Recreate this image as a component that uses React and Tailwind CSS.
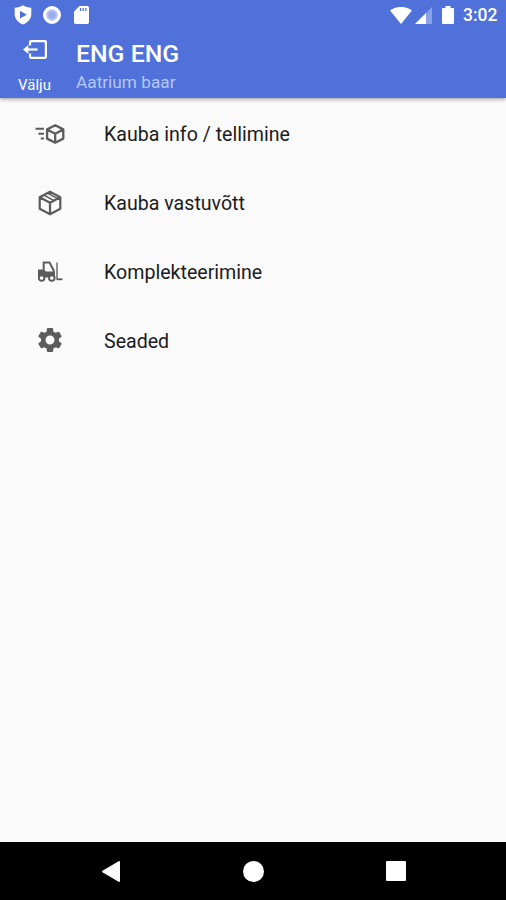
const ShieldIcon = () => (
    <svg className="w-[18px] h-5" viewBox="0 0 18 20" aria-hidden="true">
        <path fill="currentColor" fillRule="evenodd" d="M9 0.3c2.3 1.6 5 2.3 8.300 2.4v6.6c0 4.6-3.300 8.2-8.300 10.3-5-2.1-8.300-5.700-8.300-10.300V2.700c3.300-.1 6-.8 8.300-2.400zM6 5.800v7.800l6.800-3.900z" />
    </svg>
);

const RecordIcon = () => (
    <svg className="w-[18px] h-[18px]" viewBox="0 0 18 18" aria-hidden="true">
        <circle cx="9" cy="9" r="7.400" fill="#b4c3f2" stroke="currentColor" strokeWidth="3.200" />
        <circle cx="9" cy="9" r="3.600" fill="#9aaeeb" />
    </svg>
);

const SdCardIcon = () => (
    <svg className="w-[15px] h-[18px]" viewBox="0 0 15 18" aria-hidden="true">
        <path fill="currentColor" d="M5.500 0H13.300Q15 0 15 1.700V16.300Q15 18 13.300 18H1.700Q0 18 0 16.300V5.500z" />
        <path stroke="#4f71d9" strokeWidth="1.300" d="M6.500 2v3M9.200 2v3M11.900 2v3" />
    </svg>
);

const WifiIcon = () => (
    <svg className="w-[22px] h-[17px]" viewBox="0 0 22 17" aria-hidden="true">
        <path fill="currentColor" d="M0 3.500C6.500-1.200 15.500-1.200 22 3.500L11 17z" />
    </svg>
);

const SignalIcon = () => (
    <svg className="w-[17px] h-[17px]" viewBox="0 0 17 17" aria-hidden="true">
        <path fill="currentColor" opacity=".35" d="M17 0v17H0z" />
        <path fill="currentColor" d="M11 6v11H0z" />
    </svg>
);

const BatteryIcon = () => (
    <svg className="w-3 h-[18px]" viewBox="0 0 12 18" aria-hidden="true">
        <path fill="currentColor" d="M3.500 0h5v2H11Q12 2 12 3V17Q12 18 11 18H1Q0 18 0 17V3Q0 2 1 2H3.500z" />
    </svg>
);

const ExitIcon = () => (
    <svg className="w-6 h-[19px]" viewBox="0 0 24 19" fill="none" stroke="currentColor" strokeWidth="2.200" aria-hidden="true">
        <path d="M7 5.500V2.200Q7 1.200 8 1.200H22Q22.900 1.200 22.900 2.200V16.800Q22.900 17.800 22 17.800H8Q7 17.800 7 16.800V13.500" />
        <path d="M14.500 9.500H3" />
        <path fill="currentColor" stroke="none" d="M0 9.500L5.400 5V14z" />
    </svg>
);

const BoxFastIcon = () => (
    <svg className="w-[30px] h-5" viewBox="0 0 30 20" fill="none" stroke="currentColor" strokeWidth="2.300" aria-hidden="true">
        <path d="M.5 4.800H9M3.400 9.700H9M5.800 14.600H9" strokeWidth="2" />
        <path strokeLinejoin="round" d="M20.200 1.300L28.300 5.400V14.600L20.200 18.700L12.100 14.600V5.400zM12.100 5.400L20.200 9.700L28.300 5.400M20.200 9.700V18.700" />
    </svg>
);

const BoxIcon = () => (
    <svg className="w-6 h-[26px]" viewBox="0 0 24 26" fill="none" stroke="currentColor" strokeWidth="2.200" strokeLinejoin="round" aria-hidden="true">
        <path d="M12 1.700L22.300 7.200V18.800L12 24.300L1.700 18.800V7.200zM1.700 7.200L12 12.800L22.300 7.200M12 12.800V24.300" />
        <path d="M5.700 5L16.100 10.700M9.400 3.200L19.700 8.700" strokeWidth="1.500" />
    </svg>
);

const ForkliftIcon = () => (
    <svg className="w-[26px] h-[21px]" viewBox="0 0 26 21" fill="none" stroke="currentColor" aria-hidden="true">
        <path d="M6.700 10V1.500H12.500L16.700 9.500V14" strokeWidth="2" />
        <path fill="currentColor" stroke="none" d="M1 8.500H5.500L9.300 10.500H17.800V16.500H1z" />
        <circle cx="4.600" cy="17" r="2.800" fill="#fafafa" strokeWidth="1.900" />
        <circle cx="14.800" cy="17" r="2.800" fill="#fafafa" strokeWidth="1.900" />
        <path d="M20 1.500V18" strokeWidth="1.900" opacity=".7" />
        <path d="M19.500 18.300H25.500" strokeWidth="1.800" />
    </svg>
);

const GearIcon = () => (
    <svg className="mb-[2px] w-[30px] h-[30px]" viewBox="0 0 24 24" aria-hidden="true">
        <path fill="currentColor" d="M19.140 12.940c.04-.3.06-.61.06-.94 0-.32-.02-.64-.07-.94l2.030-1.580c.18-.14.23-.41.12-.61l-1.920-3.320c-.12-.22-.37-.29-.59-.22l-2.390.96c-.5-.38-1.030-.7-1.620-.94l-.36-2.540c-.04-.24-.24-.41-.48-.41h-3.840c-.24 0-.43.17-.47.41l-.36 2.540c-.59.24-1.130.57-1.620.94l-2.390-.96c-.22-.08-.47 0-.59.22L2.740 8.870c-.12.21-.08.47.12.61l2.030 1.580c-.05.3-.09.63-.09.94s.02.64.07.94l-2.030 1.580c-.18.14-.23.41-.12.61l1.920 3.320c.12.22.37.29.59.22l2.390-.96c.5.38 1.030.7 1.620.94l.36 2.540c.05.24.24.41.48.41h3.840c.24 0 .44-.17.47-.41l.36-2.540c.59-.24 1.130-.56 1.620-.94l2.390.96c.22.08.47 0 .59-.22l1.920-3.320c.12-.22.07-.47-.12-.61l-2.010-1.580zM12 15.600c-1.980 0-3.600-1.620-3.600-3.600s1.620-3.600 3.600-3.600 3.600 1.620 3.600 3.600-1.620 3.600-3.600 3.600z" />
    </svg>
);

const menuItems = [
    { label: 'Kauba info / tellimine', Icon: BoxFastIcon },
    { label: 'Kauba vastuvõtt', Icon: BoxIcon },
    { label: 'Komplekteerimine', Icon: ForkliftIcon },
    { label: 'Seaded', Icon: GearIcon },
];

function StatusBar() {
    return (
        <div className="flex h-[30px] shrink-0 items-center justify-between pl-[14px] pr-[9px]">
            <div className="flex items-center">
                <ShieldIcon />
                <span className="ml-[11px]"><RecordIcon /></span>
                <span className="ml-[13px]"><SdCardIcon /></span>
            </div>
            <div className="flex items-center">
                <WifiIcon />
                <span className="ml-[3px]"><SignalIcon /></span>
                <span className="ml-[10px]"><BatteryIcon /></span>
                <span className="ml-[9px] pt-[2px] w-[34px] text-[17.500px] leading-none font-medium whitespace-nowrap">3:02</span>
            </div>
        </div>
    );
}

function Header() {
    return (
        <header className="z-10 h-[98px] shrink-0 bg-[#4f71d9] text-white shadow-[0_1px_4px_rgba(0,0,0,0.4)]">
            <StatusBar />
            <div className="flex">
                <button className="flex w-[69px] flex-col items-center pt-[10px]">
                    <ExitIcon />
                    <span className="mt-4 text-[15px] leading-5">Välju</span>
                </button>
                <div className="ml-[7px] pt-2">
                    <h1 className="text-[24.800px] leading-8 font-medium">ENG ENG</h1>
                    <p className="mt-[2px] text-[17.250px] leading-5 text-[#b5c7f8]">Aatrium baar</p>
                </div>
            </div>
        </header>
    );
}

function NavBar() {
    return (
        <nav className="flex h-[58px] shrink-0 items-center justify-between bg-black pl-[102px] pr-[100px] text-white">
            <svg className="w-[18px] h-[21px]" viewBox="0 0 18 21" aria-hidden="true">
                <path fill="currentColor" d="M17 0Q18 0 18 1V20Q18 21 17 21L0.500 11.300Q-.3 10.500 .5 9.700z" />
            </svg>
            <span className="h-[21px] w-[21px] rounded-full bg-white" />
            <span className="h-5 w-5 rounded-[1px] bg-white" />
        </nav>
    );
}

export default function App() {
    return (
        <div className="flex h-screen w-full flex-col overflow-hidden bg-[#fafafa] font-['Roboto',sans-serif]">
            <Header />
            <main className="flex-1 pt-px">
                <ul>
                    {menuItems.map(({ label, Icon }) => (
                        <li key={label} className="flex h-[69px] items-center text-[#5c5c5c]">
                            <span className="flex w-[100px] justify-center">
                                <Icon />
                            </span>
                            <span className="ml-1 pt-[2px] text-[19.600px] text-[#1c1c1c]">{label}</span>
                        </li>
                    ))}
                </ul>
            </main>
            <NavBar />
        </div>
    );
}
